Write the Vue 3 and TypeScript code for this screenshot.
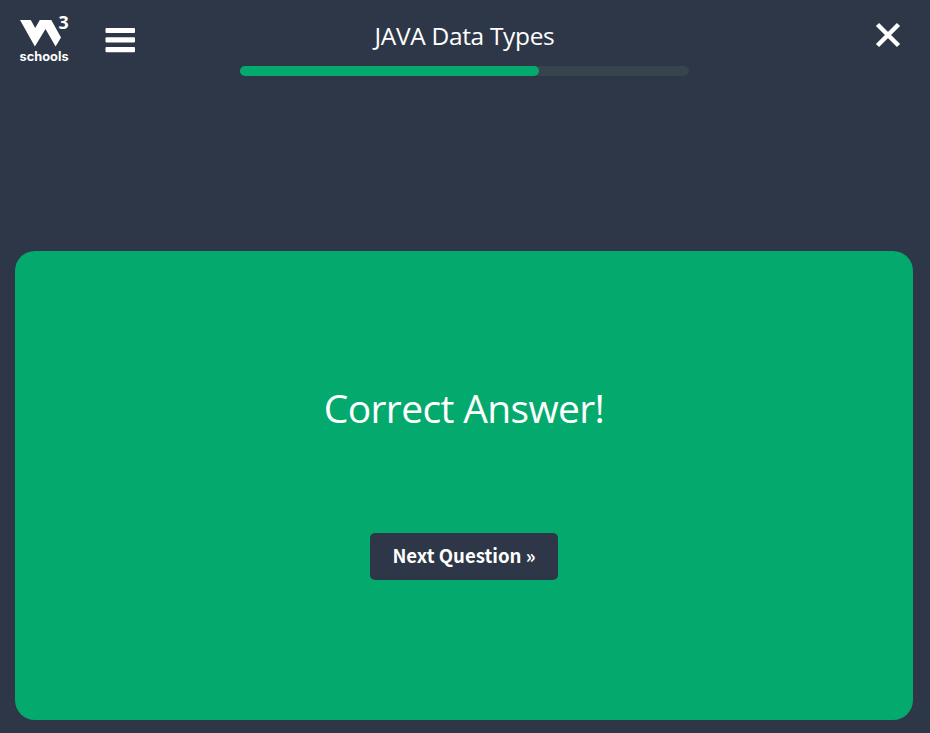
<script setup lang="ts">
const title = 'JAVA Data Types'
const progress = 66.6
</script>

<template>
  <div class="page">
    <header class="header">
      <svg class="logo" width="60" height="58" viewBox="16 8 60 58" fill="#fff">
        <path d="M20 20h10.800l4.400 8L39.800 20H51.300L61 37.500l-5.400 9L45.500 29 34.900 46.500z" />
        <text class="logo-three" x="58.500" y="29" textLength="10.200" lengthAdjust="spacingAndGlyphs">3</text>
        <text class="logo-name" x="19.600" y="60.800" textLength="49" lengthAdjust="spacingAndGlyphs">schools</text>
      </svg>
      <svg class="menu" width="30" height="26" viewBox="0 0 30 26" fill="#fff">
        <rect x=".5" y="0" width="29.500" height="5" rx="1" />
        <rect x=".5" y="9.300" width="29.500" height="5.300" rx="1" />
        <rect x=".5" y="19" width="29.500" height="5.300" rx="1" />
      </svg>
      <div class="center">
        <h1 class="title">{{ title }}</h1>
        <div class="track"><div class="bar" :style="{ width: progress + '%' }"></div></div>
      </div>
      <svg class="close" width="26" height="26" viewBox="0 0 26 26" stroke="#fff" stroke-width="4.500">
        <path d="M2.500 2.500l21 21M23.500 2.500l-21 21" />
      </svg>
    </header>
    <main class="card">
      <h2 class="message">Correct Answer!</h2>
      <button class="next" type="button">Next Question »</button>
    </main>
  </div>
</template>

<style>
body { background: #2e3748; }
</style>

<style scoped>
.page {
  box-sizing: border-box;
  height: 733px;
  padding: 0 17px 13px 15px;
  display: flex;
  flex-direction: column;
  background: #2e3748;
  color: #fff;
  font-family: "Open Sans", "Noto Sans", sans-serif;
  overflow: hidden;
}
.header {
  height: 251px;
  flex: none;
  display: grid;
  grid-template-columns: 90px 135px 449px 1fr;
  align-items: start;
}
.logo { margin: 8px 0 0 1px; }
.logo-three { font: 700 18px "Noto Sans", sans-serif; }
.logo-name { font: 700 12.500px Inter, sans-serif; }
.menu { margin-top: 28px; }
.center { padding-top: 18px; }
.title {
  margin: 0;
  height: 48px;
  line-height: 36px;
  font-size: 24.500px;
  letter-spacing: -0.330px;
  font-weight: 400;
  text-align: center;
  white-space: nowrap;
}
.track { height: 10px; border-radius: 5px; background: #38444d; }
.bar { height: 10px; border-radius: 5px; background: #04aa6d; }
.close { justify-self: end; margin: 22px 12px 0 0; }
.card {
  height: 469px;
  border-radius: 20px;
  background: #04aa6d;
  display: flex;
  flex-direction: column;
  align-items: center;
}
.message {
  margin: 127px 0 0;
  height: 155px;
  line-height: 60px;
  font-size: 39px;
  letter-spacing: -0.650px;
  font-weight: 400;
  white-space: nowrap;
}
.next {
  width: 188px;
  height: 47px;
  padding: 0 0 3px;
  border: 0;
  border-radius: 5px;
  background: #2e3748;
  color: #fff;
  font: 700 18.600px/44px "Noto Sans CJK SC", sans-serif;
  white-space: nowrap;
}
</style>
